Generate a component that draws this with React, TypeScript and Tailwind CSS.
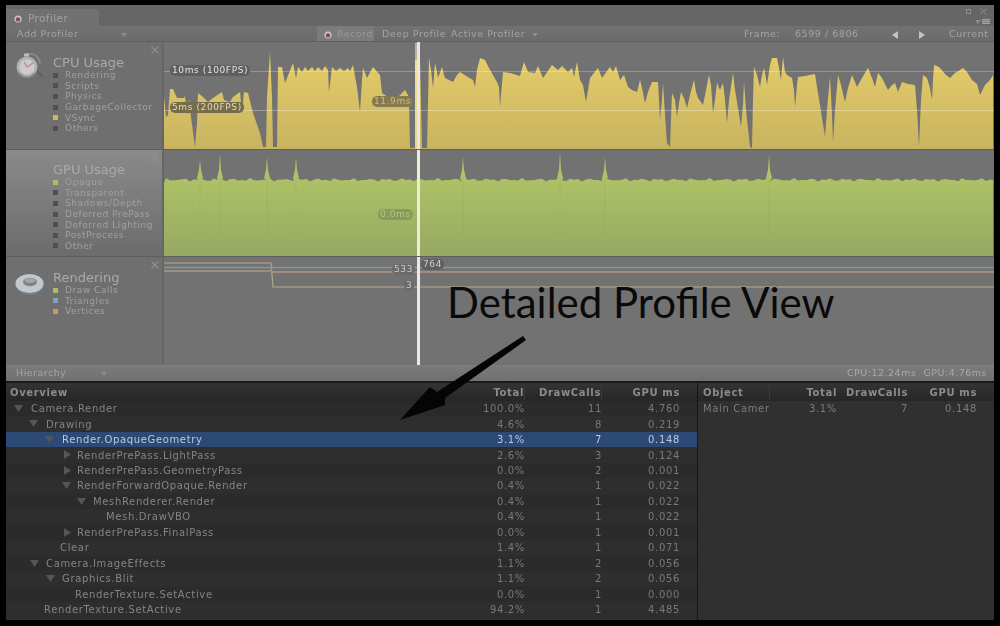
import React from "react";

const cpu =
  "164,149 164,96 166,117 168,115 170,89 173,89 177,98 184,98 185,96 187,115 189,99 191,117 195,147 197,123 198,93 203,97 208,102 213,98 222,92 224,100 230,102 233,97 240,92 242,113 244,92 248,93 253,113 260,133 263,147 266,147 267,97 270,52 272,97 273,147 277,147 278,67 282,67 285,83 293,63 296,78 298,67 302,72 305,67 308,71 312,67 315,71 318,67 322,71 325,66 328,70 329,93 332,67 336,71 340,68 344,71 348,68 350,71 353,65 357,87 360,112 362,80 363,68 367,78 373,67 380,75 382,93 385,95 392,100 398,97 405,90 408,95 409,100 410,148 415,148 415,60 420,60 422,148 427,148 429,58 431,70 433,88 435,63 437,72 438,78 442,67 444,75 445,78 449,80 453,82 457,75 460,72 466,76 473,80 475,87 477,70 480,58 485,60 489,68 493,75 497,82 499,87 500,107 503,72 510,73 520,76 524,62 528,72 535,73 538,66 543,78 552,65 558,70 562,66 568,72 572,68 574,77 577,62 580,80 583,85 586,102 590,78 598,68 602,78 610,67 613,72 616,66 620,80 624,75 628,87 632,90 637,92 640,80 642,88 645,103 648,92 652,82 658,82 659,100 660,120 662,100 663,83 665,115 667,143 670,147 671,120 672,93 675,100 677,117 679,103 681,92 684,98 687,108 690,95 694,80 696,92 698,98 703,105 706,90 709,75 711,85 713,113 715,100 717,83 719,88 720,90 723,83 725,100 727,123 729,100 733,73 735,90 738,108 741,127 743,105 744,82 746,110 750,147 752,148 753,100 754,67 757,75 760,87 762,75 764,68 766,78 767,85 770,65 772,58 777,58 779,68 781,80 783,57 785,72 787,75 792,78 794,90 795,107 797,85 798,77 805,76 815,74 817,87 820,105 825,137 827,110 830,77 832,115 833,143 835,110 838,75 841,85 845,102 848,88 852,75 857,87 862,78 868,68 872,78 875,87 878,73 882,78 888,90 892,85 895,83 898,92 902,82 908,84 915,85 917,110 919,147 921,100 923,75 927,78 930,88 932,100 933,80 934,65 937,66 940,68 945,74 950,78 955,73 960,70 963,68 967,72 972,80 977,84 980,95 985,85 990,80 993,75 993,149";

const spikes: [number, number][] = [
  [200, 160],
  [220, 154],
  [267, 157],
  [296, 157],
  [463, 157],
  [560, 153],
  [605, 157],
  [769, 155],
];

function gpuPoints() {
  const pts: string[] = ["164,256", "164,183"];
  for (let x = 166; x < 993; x += 4) {
    const hit = spikes.find(([sx]) => sx >= x && sx < x + 4);
    const y = 179.8 + Math.sin(x * 0.9) * 0.9 + Math.sin(x * 0.37) * 0.9;
    pts.push(`${x},${y.toFixed(1)}`);
    if (hit) {
      pts.push(`${hit[0] - 3},178 ${hit[0] - 1},170 ${hit[0]},${hit[1]} ${hit[0] + 1},170 ${hit[0] + 3},178`);
    }
  }
  pts.push("993,180", "993,256");
  return pts.join(" ");
}

function Caret() {
  return (
    <svg width="6" height="4" viewBox="0 0 6 4" className="shrink-0">
      <polygon points="0,0 6,0 3,4" fill="#8c8c8c" />
    </svg>
  );
}

function RecIcon() {
  return (
    <svg width="8" height="8" viewBox="0 0 8 8" className="shrink-0">
      <circle cx="4" cy="4" r="3.6" fill="#c9c3c3" />
      <circle cx="4" cy="4.4" r="2.2" fill="#8a4a52" />
    </svg>
  );
}

function CloseX() {
  return (
    <svg width="8" height="8" viewBox="0 0 8 8" className="absolute right-[3px] top-[4px]">
      <path d="M0.5 0.5 L7.5 7.5 M7.5 0.5 L0.5 7.5" stroke="#8f8f8f" strokeWidth="1.1" />
    </svg>
  );
}

function Watch() {
  return (
    <svg width="30" height="28" viewBox="0 0 30 28" className="shrink-0 -mt-[3px]">
      <path d="M20 17 L28 25" stroke="#5c5c5c" strokeWidth="1.6" />
      <path d="M13 2 A10 10 0 0 1 25 12" stroke="#8d8d8d" strokeWidth="1.4" fill="none" />
      <circle cx="12" cy="15" r="10.5" fill="#b0b0b0" />
      <circle cx="12" cy="15" r="7.8" fill="#cfc9c9" />
      <path d="M12 15 L18 11 M12 15 L9 10" stroke="#b08a90" strokeWidth="1.4" />
      <path d="M4 21 A10 10 0 0 0 20 21" stroke="#8b8b8b" strokeWidth="2" fill="none" />
      <rect x="9" y="1.5" width="5" height="3" fill="#bdbdbd" />
    </svg>
  );
}

function Torus() {
  return (
    <svg width="30" height="24" viewBox="0 0 30 24" className="shrink-0 mt-[2px]">
      <ellipse cx="15" cy="13" rx="14" ry="10" fill="#6f7f8c" />
      <ellipse cx="14.5" cy="11.5" rx="14" ry="9.5" fill="#c4c8ca" />
      <ellipse cx="15" cy="10" rx="7" ry="4.2" fill="#7d8386" />
      <ellipse cx="15" cy="8.6" rx="5.4" ry="2.4" fill="#a4a8aa" />
    </svg>
  );
}

type LegendItem = { name: string; color: string };

function Sidebar({
  title,
  icon,
  items,
  selected,
}: {
  title: string;
  icon?: React.ReactNode;
  items: LegendItem[];
  selected?: boolean;
}) {
  return (
    <div
      className={`relative w-[156px] shrink-0 flex pl-[9px] ${selected ? "pt-[12px]" : "pt-[13px]"} ${
        selected ? "bg-gradient-to-b from-[#8a8a8a] to-[#6c6c6c]" : "bg-[#6f6f6f]"
      }`}
    >
      <div className="w-[38px] shrink-0">{icon}</div>
      <div className="flex flex-col">
        <div className="h-[15px] text-[13px] leading-[15px] text-[#a9a9a9]">{title}</div>
        {items.map((it) => (
          <div key={it.name} className="flex items-center h-[10.6px] gap-[7px]">
            <span className="w-[5px] h-[5px] shrink-0" style={{ background: it.color }} />
            <span className="text-[9px] leading-[10px] tracking-[0.55px] whitespace-nowrap text-[#a0a0a0]">
              {it.name}
            </span>
          </div>
        ))}
      </div>
      <CloseX />
    </div>
  );
}

const dark = "#505050";
const cpuLegend: LegendItem[] = [
  { name: "Rendering", color: dark },
  { name: "Scripts", color: dark },
  { name: "Physics", color: dark },
  { name: "GarbageCollector", color: dark },
  { name: "VSync", color: "#cdb85f" },
  { name: "Others", color: dark },
];
const gpuLegend: LegendItem[] = [
  { name: "Opaque", color: "#a9bd63" },
  { name: "Transparent", color: dark },
  { name: "Shadows/Depth", color: dark },
  { name: "Deferred PrePass", color: dark },
  { name: "Deferred Lighting", color: dark },
  { name: "PostProcess", color: dark },
  { name: "Other", color: dark },
];
const renderLegend: LegendItem[] = [
  { name: "Draw Calls", color: "#a9bd63" },
  { name: "Triangles", color: "#7fa3b5" },
  { name: "Vertices", color: "#c49a6c" },
];

function Pill({ className, children }: { className: string; children: React.ReactNode }) {
  return (
    <span
      className={`absolute rounded-[5px] h-[11px] px-[2px] flex items-center text-[9px] tracking-[0.6px] whitespace-nowrap ${className}`}
    >
      {children}
    </span>
  );
}

const rows = [
  { name: "Camera.Render", arrow: "down", arrowX: 8, textX: 25, total: "100.0%", dc: "11", gpu: "4.760" },
  { name: "Drawing", arrow: "down", arrowX: 23, textX: 40, total: "4.6%", dc: "8", gpu: "0.219" },
  { name: "Render.OpaqueGeometry", arrow: "down", arrowX: 39, textX: 56, total: "3.1%", dc: "7", gpu: "0.148", sel: true },
  { name: "RenderPrePass.LightPass", arrow: "right", arrowX: 57, textX: 71, total: "2.6%", dc: "3", gpu: "0.124" },
  { name: "RenderPrePass.GeometryPass", arrow: "right", arrowX: 57, textX: 71, total: "0.0%", dc: "2", gpu: "0.001" },
  { name: "RenderForwardOpaque.Render", arrow: "down", arrowX: 56, textX: 71, total: "0.4%", dc: "1", gpu: "0.022" },
  { name: "MeshRenderer.Render", arrow: "down", arrowX: 71, textX: 87, total: "0.4%", dc: "1", gpu: "0.022" },
  { name: "Mesh.DrawVBO", textX: 100, total: "0.4%", dc: "1", gpu: "0.022" },
  { name: "RenderPrePass.FinalPass", arrow: "right", arrowX: 57, textX: 71, total: "0.0%", dc: "1", gpu: "0.001" },
  { name: "Clear", textX: 54, total: "1.4%", dc: "1", gpu: "0.071" },
  { name: "Camera.ImageEffects", arrow: "down", arrowX: 24, textX: 40, total: "1.1%", dc: "2", gpu: "0.056" },
  { name: "Graphics.Blit", arrow: "down", arrowX: 40, textX: 56, total: "1.1%", dc: "2", gpu: "0.056" },
  { name: "RenderTexture.SetActive", textX: 69, total: "0.0%", dc: "1", gpu: "0.000" },
  { name: "RenderTexture.SetActive", textX: 38, total: "94.2%", dc: "1", gpu: "4.485" },
];

function TreeArrow({ dir, x }: { dir: string; x: number }) {
  return (
    <svg width="9" height="9" viewBox="0 0 9 9" className="absolute top-[3px]" style={{ left: x }}>
      <polygon points={dir === "down" ? "0,1 9,1 4.5,8" : "1,0 8,4.5 1,9"} fill="#565656" />
    </svg>
  );
}

export default function App() {
  return (
    <div className="relative w-[1000px] h-[626px] bg-black overflow-hidden pt-[5px] px-[6px] font-['DejaVu_Sans',sans-serif]">
      <div className="relative w-[988px] h-[615px] flex flex-col blur-[0.5px]">
        {/* Tab strip */}
        <div className="h-[21px] bg-[#666666] flex items-end relative shrink-0">
          <div className="w-[93px] h-[17px] pt-[3px] bg-[#717171] rounded-tr-[3px] flex items-center pl-[8px] gap-[6px]">
            <RecIcon />
            <span className="text-[10.5px] tracking-[0.4px] text-[#a0a0a0]">Profiler</span>
          </div>
          <div className="absolute right-[7px] top-[3px] flex items-center gap-[9px]">
            <span className="w-[5px] h-[5px] border border-[#8f8f8f]" />
            <svg width="7" height="7" viewBox="0 0 7 7">
              <path d="M0.5 0.5 L6.5 6.5 M6.5 0.5 L0.5 6.5" stroke="#8f8f8f" />
            </svg>
          </div>
          <div className="absolute right-[4px] top-[14px] flex items-center gap-[1px]">
            <Caret />
            <span className="w-[8px] h-[5px] border-y border-[#a5a5a5] bg-[linear-gradient(#6a6a6a,#a5a5a5_50%,#6a6a6a)]" />
          </div>
        </div>
        {/* Toolbar */}
        <div className="h-[16px] pt-[2px] bg-gradient-to-b from-[#727272] to-[#6b6b6b] border-b border-[#5f5f5f] flex items-center text-[9.5px] tracking-[0.55px] text-[#a4a4a4] shrink-0 whitespace-nowrap">
          <span className="ml-[11px] w-[104px]">Add Profiler</span>
          <Caret />
          <div className="ml-[190px] -mt-[2px] pt-[2px] w-[57px] h-[15px] bg-[#7b7b7b] flex items-center pl-[7px] gap-[5px]">
            <RecIcon />
            <span className="text-[#9a9a9a]">Record</span>
          </div>
          <span className="ml-[8px] w-[69px]">Deep Profile</span>
          <span className="w-[81px]">Active Profiler</span>
          <Caret />
          <span className="ml-[206px] w-[51px]">Frame:</span>
          <span className="w-[97px]">6599 / 6806</span>
          <svg width="6" height="8" viewBox="0 0 6 8" className="shrink-0">
            <polygon points="6,0 6,8 0,4" fill="#c4c4c4" />
          </svg>
          <svg width="6" height="8" viewBox="0 0 6 8" className="ml-[21px] shrink-0">
            <polygon points="0,0 0,8 6,4" fill="#c4c4c4" />
          </svg>
          <span className="ml-[24px]">Current</span>
        </div>

        {/* CPU */}
        <div className="h-[108px] flex gap-[2px] bg-[#666666] border-b border-[#5e5e5e] shrink-0">
          <Sidebar title="CPU Usage" icon={<Watch />} items={cpuLegend} />
          <div className="relative flex-1 bg-[#727272]">
            <svg viewBox="164 42 830 107" className="block w-[830px] h-[107px]">
              <defs>
                <linearGradient id="y" x1="0" y1="0" x2="0" y2="1">
                  <stop offset="0" stopColor="#e6cd6a" />
                  <stop offset="1" stopColor="#c8b460" />
                </linearGradient>
              </defs>
              <polygon points={cpu} fill="url(#y)" />
              <line x1="164" x2="994" y1="71.5" y2="71.5" stroke="#ffffff" strokeOpacity="0.25" />
              <line x1="164" x2="994" y1="110.5" y2="110.5" stroke="#ffffff" strokeOpacity="0.3" />
              <rect x="415" y="43" width="5" height="106" fill="#fff3c0" fillOpacity="0.5" />
            </svg>
            <Pill className="left-[6px] top-[23px] bg-[#5f5f5f] text-[#e2e2e2]">10ms (100FPS)</Pill>
            <Pill className="left-[6px] top-[60px] bg-[#756c4c] text-[#e4dab0]">5ms (200FPS)</Pill>
            <Pill className="left-[208px] top-[54px] bg-[#85794f] text-[#c9bd84]">11.9ms</Pill>
            <span className="absolute left-[253px] top-0 bottom-0 w-[3px] bg-[#e6e6e6]" />
          </div>
        </div>

        {/* GPU */}
        <div className="h-[107px] flex gap-[2px] bg-[#666666] border-b border-[#5e5e5e] shrink-0">
          <Sidebar title="GPU Usage" items={gpuLegend} selected />
          <div className="relative flex-1 bg-[#727272]">
            <svg viewBox="164 150 830 106" className="block w-[830px] h-[106px]">
              <defs>
                <linearGradient id="g" x1="0" y1="0" x2="0" y2="1">
                  <stop offset="0" stopColor="#b4ca66" />
                  <stop offset="1" stopColor="#97a863" />
                </linearGradient>
              </defs>
              <polygon points={gpuPoints()} fill="url(#g)" />
              {spikes.map(([x]) => (
                <line key={x} x1={x} x2={x} y1="180" y2="235" stroke="#8fa45a" strokeOpacity="0.25" />
              ))}
            </svg>
            <Pill className="left-[214px] top-[59px] bg-[#8a9a5c] text-[#b4c680] rounded-[6px]">0.0ms</Pill>
            <span className="absolute left-[253px] top-0 bottom-0 w-[3px] bg-[#eaeed8]" />
          </div>
        </div>

        {/* Rendering */}
        <div className="h-[108px] flex gap-[2px] bg-[#666666] shrink-0">
          <Sidebar title="Rendering" icon={<Torus />} items={renderLegend} />
          <div className="relative flex-1 bg-[#727272]">
            <svg viewBox="164 257 830 108" className="block w-[830px] h-[108px]">
              <polyline points="164,263 271,263 273,287 994,287" fill="none" stroke="#b3ab82" strokeWidth="1.2" />
              <polyline points="164,267.5 994,267.5" fill="none" stroke="#7f9aa6" strokeWidth="1.4" />
              <polyline points="164,271 271,271 273,272 994,272" fill="none" stroke="#a08d7b" strokeWidth="2" />
            </svg>
            <Pill className="left-[228px] top-[7px] bg-[#6b6b6b] text-[#c8c8c8]">533</Pill>
            <Pill className="left-[240px] top-[23px] bg-[#6b6b6b] text-[#c8c8c8]">3</Pill>
            <Pill className="left-[257px] top-[2px] bg-[#5f5f5f] text-[#d0d0d0]">764</Pill>
            <span className="absolute left-[253px] top-0 bottom-0 w-[3px] bg-[#e8e8e8]" />
          </div>
        </div>

        {/* Hierarchy bar */}
        <div className="h-[16px] pt-[1px] bg-gradient-to-b from-[#7c7c7c] to-[#6f6f6f] flex items-center text-[9.5px] tracking-[0.5px] text-[#a6a6a6] shrink-0 whitespace-nowrap">
          <span className="ml-[10px] w-[85px]">Hierarchy</span>
          <Caret />
          <span className="ml-auto mr-[7px] text-[9.5px] text-[#a8a8a8]">CPU:12.24ms&nbsp;&nbsp;GPU:4.76ms</span>
        </div>

        {/* Table */}
        <div className="flex-1 flex bg-[#2e2e2e] border-t-[2px] border-[#1a1a1a] text-[10px] tracking-[0.65px] text-[#848484] whitespace-nowrap">
          <div className="w-[691px] shrink-0 flex flex-col">
            <div className="h-[18px] bg-gradient-to-b from-[#343434] to-[#262626] flex items-center font-bold text-[#8c8c8c] shrink-0">
              <span className="flex-1 pl-[4px]">Overview</span>
              <span className="w-[70px] text-right border-r border-[#3a3a3a]">Total</span>
              <span className="w-[77px] text-right border-r border-[#3a3a3a]">DrawCalls</span>
              <span className="w-[78px] text-right">GPU ms</span>
              <span className="w-[17px]" />
            </div>
            {rows.map((r, i) => (
              <div
                key={i}
                className={`relative flex items-center h-[15.46px] shrink-0 ${
                  r.sel ? "bg-[#2c4a75] text-[#bcc9dc]" : i % 2 ? "bg-[#2e2e2e]" : "bg-[#2b2b2b]"
                }`}
              >
                {r.arrow && <TreeArrow dir={r.arrow} x={r.arrowX!} />}
                <span className="flex-1" style={{ paddingLeft: r.textX }}>
                  {r.name}
                </span>
                <span className={`w-[70px] text-right ${r.sel ? "" : "text-[#797979]"}`}>{r.total}</span>
                <span className={`w-[77px] text-right ${r.sel ? "" : "text-[#797979]"}`}>{r.dc}</span>
                <span className={`w-[78px] text-right ${r.sel ? "" : "text-[#797979]"}`}>{r.gpu}</span>
                <span className="w-[17px]" />
              </div>
            ))}
          </div>
          <div className="flex-1 flex flex-col border-l border-[#161616] bg-[#303030]">
            <div className="h-[18px] bg-gradient-to-b from-[#343434] to-[#262626] flex items-center font-bold text-[#8c8c8c] shrink-0">
              <span className="w-[72px] pl-[5px] border-r border-[#3a3a3a]">Object</span>
              <span className="w-[67px] text-right">Total</span>
              <span className="w-[71px] text-right">DrawCalls</span>
              <span className="w-[69px] text-right">GPU ms</span>
            </div>
            <div className="flex items-center h-[15.46px] text-[#7c7c7c]">
              <span className="w-[72px] pl-[5px]">Main Camer</span>
              <span className="w-[67px] text-right">3.1%</span>
              <span className="w-[71px] text-right">7</span>
              <span className="w-[69px] text-right">0.148</span>
            </div>
          </div>
        </div>
      </div>

      {/* Annotation */}
      <div className="absolute left-[447px] top-[276px] text-[42px] leading-[52px] text-[#0a0a0a] font-['Lato',sans-serif] whitespace-nowrap">
        Detailed Profile View
      </div>
      <svg width="1000" height="626" viewBox="0 0 1000 626" className="absolute left-0 top-0 pointer-events-none">
        <polygon points="523,336 526,340 445,398 445,405 400,420 430,387 437,392" fill="#050505" />
      </svg>
    </div>
  );
}
